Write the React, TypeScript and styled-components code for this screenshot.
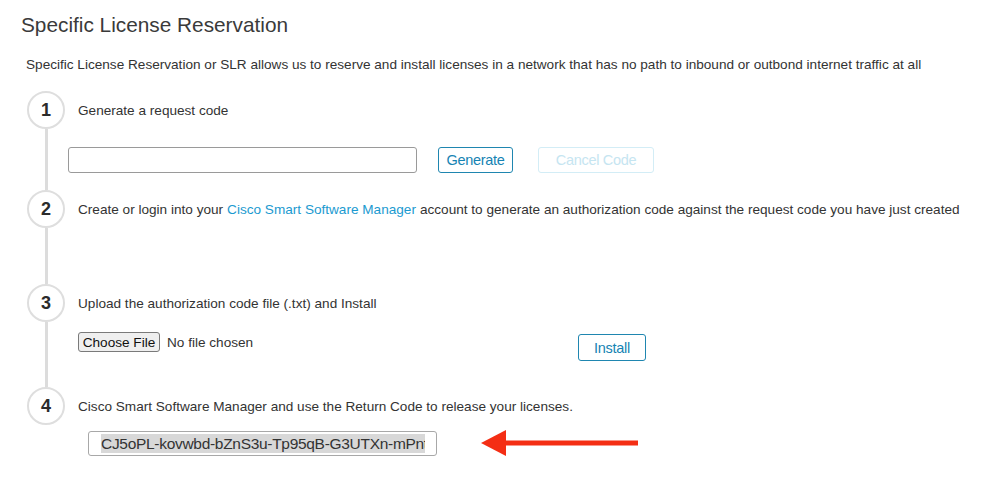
import React from "react";
import styled, { createGlobalStyle } from "styled-components";

const GlobalStyle = createGlobalStyle`
  body {
    margin: 0;
    background: #ffffff;
    font-family: "Liberation Sans", Arial, sans-serif;
    color: #333333;
  }
`;

const Page = styled.div`
  width: 995px;
  height: 483px;
  padding: 13px 0 0 21px;
  box-sizing: border-box;
`;

const Title = styled.h1`
  margin: 0;
  font-size: 20.8px;
  line-height: 24px;
  font-weight: 400;
  color: #3a3a3a;
`;

const Description = styled.p`
  margin: 20px 0 0 5px;
  font-size: 13.6px;
  line-height: 16px;
  color: #333333;
`;

const Steps = styled.div`
  margin: 18px 0 0 6px;
  display: flex;
  flex-direction: column;
`;

const Step = styled.div`
  display: flex;
  gap: 13px;
`;

const Rail = styled.div`
  width: 38px;
  display: flex;
  flex-direction: column;
  align-items: center;
  flex-shrink: 0;
`;

const Circle = styled.div`
  width: 38px;
  height: 38px;
  box-sizing: border-box;
  border: 2px solid #dedede;
  border-radius: 50%;
  display: flex;
  align-items: center;
  justify-content: center;
  font-size: 18px;
  font-weight: 700;
  color: #2b2b2b;
`;

const Line = styled.div`
  flex: 1;
  width: 3px;
  background: #dcdcdc;
`;

const Content = styled.div<{ $bottom: number }>`
  flex: 1;
  display: flex;
  flex-direction: column;
  padding-bottom: ${(p) => p.$bottom}px;
`;

const StepHeader = styled.div`
  height: 38px;
  display: flex;
  align-items: center;
  font-size: 13.6px;
  color: #333333;
  white-space: nowrap;
`;

const Link = styled.a`
  color: #1b9ad0;
  text-decoration: none;
  margin: 0 4px;
`;

const Row = styled.div<{ $top: number; $left?: number }>`
  display: flex;
  align-items: center;
  margin-top: ${(p) => p.$top}px;
  margin-left: ${(p) => p.$left ?? 0}px;
`;

const TextField = styled.input`
  width: 349px;
  height: 26px;
  box-sizing: border-box;
  border: 1px solid #9a9a9a;
  border-radius: 3px;
  outline: none;
`;

const OutlineButton = styled.button<{ $disabled?: boolean; $width: number; $height?: number }>`
  width: ${(p) => p.$width}px;
  height: ${(p) => p.$height ?? 26}px;
  box-sizing: border-box;
  background: #ffffff;
  border: 1px solid ${(p) => (p.$disabled ? "#d3edf6" : "#1f86b0")};
  border-radius: 3px;
  color: ${(p) => (p.$disabled ? "#c6e5f1" : "#1683b3")};
  font-family: "Liberation Sans", Arial, sans-serif;
  font-size: 14.5px;
  letter-spacing: -0.3px;
  padding: 0;
  cursor: ${(p) => (p.$disabled ? "default" : "pointer")};
`;

const FileRow = styled.div`
  display: flex;
  align-items: flex-start;
  margin-top: 10px;
`;

const FilePicker = styled.label`
  display: flex;
  align-items: center;
  gap: 7px;
  font-size: 13.6px;
  color: #333333;
  width: 500px;
`;

const ChooseButton = styled.span`
  display: inline-flex;
  align-items: center;
  justify-content: center;
  width: 82px;
  height: 20px;
  box-sizing: border-box;
  background: #efefef;
  border: 1px solid #7a7a7a;
  border-radius: 3px;
  font-size: 13.6px;
  color: #111111;
`;

const HiddenFile = styled.input`
  display: none;
`;

const InstallWrap = styled.div`
  margin-top: 2px;
`;

const CodeBox = styled.div`
  width: 349px;
  height: 25px;
  box-sizing: border-box;
  border: 1px solid #a8a8a8;
  border-radius: 3px;
  padding: 0 11px 0 12px;
  display: flex;
  align-items: center;
`;

const CodeClip = styled.div`
  flex: 1;
  overflow: hidden;
  white-space: nowrap;
  display: flex;
`;

const Selected = styled.span`
  background: #d8d8d8;
  font-size: 15.5px;
  line-height: 19px;
  color: #333333;
  letter-spacing: -0.3px;
`;

const ArrowSlot = styled.span`
  display: flex;
  margin-left: 44px;
`;

const Arrow = () => (
  <svg width="160" height="28" viewBox="0 0 160 28">
    <polygon points="0,14 25,1 25,27" fill="#f42e14" />
    <rect x="22" y="11.5" width="135" height="5" fill="#f42e14" />
  </svg>
);

const App: React.FC = () => {
  return (
    <>
      <GlobalStyle />
      <Page>
        <Title>Specific License Reservation</Title>
        <Description>
          Specific License Reservation or SLR allows us to reserve and install licenses in a network that has no path to
          inbound or outbond internet traffic at all
        </Description>
        <Steps>
          <Step>
            <Rail>
              <Circle>1</Circle>
              <Line />
            </Rail>
            <Content $bottom={17}>
              <StepHeader>Generate a request code</StepHeader>
              <Row $top={18} $left={-10}>
                <TextField type="text" />
                <OutlineButton $width={75} style={{ marginLeft: 21 }}>
                  Generate
                </OutlineButton>
                <OutlineButton $width={116} $disabled style={{ marginLeft: 25 }}>
                  Cancel Code
                </OutlineButton>
              </Row>
            </Content>
          </Step>
          <Step>
            <Rail>
              <Circle>2</Circle>
              <Line />
            </Rail>
            <Content $bottom={56}>
              <StepHeader>
                Create or login into your<Link href="#">Cisco Smart Software Manager</Link>account to generate an
                authorization code against the request code you have just created
              </StepHeader>
            </Content>
          </Step>
          <Step>
            <Rail>
              <Circle>3</Circle>
              <Line />
            </Rail>
            <Content $bottom={26}>
              <StepHeader>Upload the authorization code file (.txt) and Install</StepHeader>
              <FileRow>
                <FilePicker>
                  <ChooseButton>Choose File</ChooseButton>
                  No file chosen
                  <HiddenFile type="file" accept=".txt" />
                </FilePicker>
                <InstallWrap>
                  <OutlineButton $width={68} $height={27}>
                    Install
                  </OutlineButton>
                </InstallWrap>
              </FileRow>
            </Content>
          </Step>
          <Step>
            <Rail>
              <Circle>4</Circle>
            </Rail>
            <Content $bottom={0}>
              <StepHeader>Cisco Smart Software Manager and use the Return Code to release your licenses.</StepHeader>
              <Row $top={4} $left={10}>
                <CodeBox>
                  <CodeClip>
                    <Selected>CJ5oPL-kovwbd-bZnS3u-Tp95qB-G3UTXn-mPnt</Selected>
                  </CodeClip>
                </CodeBox>
                <ArrowSlot>
                  <Arrow />
                </ArrowSlot>
              </Row>
            </Content>
          </Step>
        </Steps>
      </Page>
    </>
  );
};

export default App;
